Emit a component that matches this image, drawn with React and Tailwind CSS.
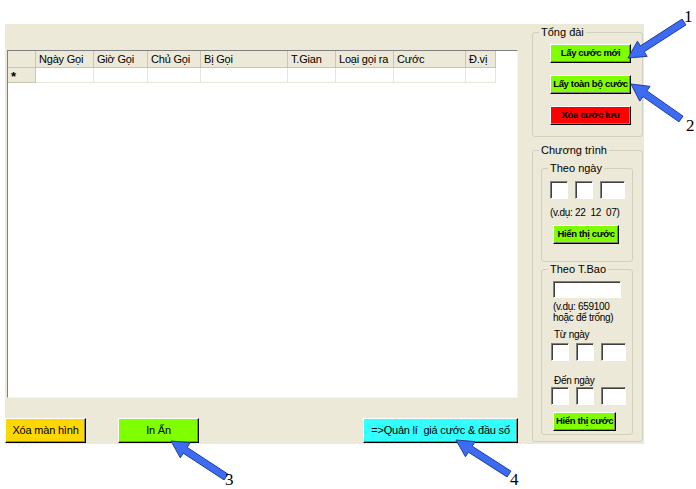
import React from "react";

const font = { fontFamily: '"Liberation Sans", Arial, sans-serif' };
const serif = { fontFamily: '"Liberation Serif", serif' };

const columns = [
  { label: "Ngày Gọi", w: "w-[58px]" },
  { label: "Giờ Gọi", w: "w-[54px]" },
  { label: "Chủ Gọi", w: "w-[53px]" },
  { label: "Bị Gọi", w: "w-[87px]" },
  { label: "T.Gian", w: "w-[48px]" },
  { label: "Loại gọi ra", w: "w-[58px]" },
  { label: "Cước", w: "w-[72px]" },
  { label: "Đ.vị", w: "w-[30px]" },
];

const arrows = [
  { from: [684, 22], to: [628, 58] },
  { from: [681, 119], to: [631, 84] },
  { from: [226, 477], to: [171, 441] },
  { from: [509, 474], to: [456, 440] },
];

function arrowPoints({ from, to }) {
  const dx = to[0] - from[0];
  const dy = to[1] - from[1];
  const len = Math.hypot(dx, dy);
  const ux = dx / len, uy = dy / len;
  const nx = -uy, ny = ux;
  const sw = 3.5, hw = 9, hl = 17;
  const neck = [to[0] - ux * hl, to[1] - uy * hl];
  const pts = [
    [from[0] + nx * sw, from[1] + ny * sw],
    [neck[0] + nx * sw, neck[1] + ny * sw],
    [neck[0] + nx * hw, neck[1] + ny * hw],
    to,
    [neck[0] - nx * hw, neck[1] - ny * hw],
    [neck[0] - nx * sw, neck[1] - ny * sw],
    [from[0] - nx * sw, from[1] - ny * sw],
  ];
  return pts.map((p) => p.join(",")).join(" ");
}

const btn3d = "border border-t-white border-l-white border-r-black border-b-black shadow-[inset_-1px_-1px_0_#808080] whitespace-nowrap p-0";
const boldBtn = "text-[9.5px] font-bold tracking-[-0.35px]";

function TextBox({ w, h = "h-[18px]" }) {
  return <div className={`${w} ${h} bg-white border border-t-[#808080] border-l-[#808080] border-r-white border-b-white shadow-[inset_1px_1px_0_#404040]`} />;
}

function Group({ title, className, children }) {
  return (
    <div className={`relative border border-[#D0D0BF] rounded-[3px] ${className}`}>
      <span className="absolute left-[6px] -top-[8px] px-[2px] bg-[#ECE9D8] text-[11px] leading-[14px] whitespace-nowrap">{title}</span>
      {children}
    </div>
  );
}

function DateBoxes() {
  return (
    <div className="flex">
      <TextBox w="w-[18px]" />
      <div className="ml-[7px]"><TextBox w="w-[18px]" /></div>
      <div className="ml-[7px]"><TextBox w="w-[25px]" /></div>
    </div>
  );
}

export default function App() {
  return (
    <div className="relative w-[696px] h-[489px] bg-white overflow-hidden text-black" style={font}>
      <div className="pt-[24px] pl-[5px]">
        <div className="w-[639px] h-[420px] bg-[#ECE9D8] flex">
          {/* left: grid + buttons */}
          <div className="w-[518px] flex flex-col">
            <div className="mt-[26px] ml-[2px] w-[511px] h-[348px] bg-white border border-t-[#808080] border-l-[#808080] border-r-[#F5F4EA] border-b-[#F5F4EA]">
              <div className="flex h-[17px] text-[11px] leading-[17px] tracking-[-0.2px]">
                <div className="w-[28px] bg-[#ECE9D8] border-r border-b border-[#C8C5B4]" />
                {columns.map((c) => (
                  <div key={c.label} className={`${c.w} bg-[#ECE9D8] border-r border-b border-[#C8C5B4] pl-[3px] whitespace-nowrap overflow-hidden`}>
                    {c.label}
                  </div>
                ))}
              </div>
              <div className="flex h-[15px] text-[11px]">
                <div className="w-[28px] bg-[#ECE9D8] border-r border-b border-[#C8C5B4] pl-[3px] leading-[17px] text-[13px] font-bold">*</div>
                {columns.map((c) => (
                  <div key={c.label} className={`${c.w} border-r border-b border-[#E8E6DA]`} />
                ))}
              </div>
            </div>
            <div className="mt-[20px] flex h-[25px] text-[11px] tracking-[-0.2px]">
              <button className={`w-[81px] h-[25px] bg-[#FFD700] ${btn3d}`}>Xóa màn hình</button>
              <button className={`ml-[32px] w-[81px] h-[25px] bg-[#80FF00] ${btn3d}`}>In Ấn</button>
              <button className={`ml-[164px] w-[155px] h-[25px] bg-[#33FFFF] ${btn3d}`}>=&gt;Quản lí&nbsp; giá cước &amp; đầu số</button>
            </div>
          </div>

          {/* right panel */}
          <div className="ml-[9px] w-[111px] flex flex-col">
            <Group title="Tổng đài" className="mt-[8px] h-[105px] pt-[11px] pl-[17px]">
              <button className={`block w-[81px] h-[19px] bg-[#80FF00] ${btn3d} ${boldBtn}`}>Lấy cước mới</button>
              <button className={`block mt-[12px] w-[81px] h-[19px] bg-[#80FF00] ${btn3d} ${boldBtn}`}>Lấy toàn bộ cước</button>
              <button className={`block mt-[12px] w-[81px] h-[19px] bg-[#FF0000] ${btn3d} ${boldBtn}`}>Xóa cước lưu</button>
            </Group>
            <Group title="Chương trình" className="mt-[13px] h-[292px] pt-[17px] pl-[8px]">
              <Group title="Theo ngày" className="w-[92px] h-[94px] pt-[12px] pl-[8px]">
                <DateBoxes />
                <div className="mt-[8px] text-[10px] leading-[12px] tracking-[-0.3px] whitespace-nowrap">(v.dụ: 22&nbsp; 12&nbsp; 07)</div>
                <button className={`block mt-[6px] ml-[3px] w-[66px] h-[19px] bg-[#80FF00] ${btn3d} ${boldBtn}`}>Hiển thị cước</button>
              </Group>
              <Group title="Theo T.Bao" className="mt-[7px] w-[92px] h-[166px] pt-[11px] pl-[11px]">
                <TextBox w="w-[68px]" h="h-[17px]" />
                <div className="mt-[3px] text-[10px] leading-[11px] tracking-[-0.3px] whitespace-nowrap">(v.dụ: 659100<br />hoặc để trống)</div>
                <div className="mt-[6px] ml-[1px] text-[10px] leading-[12px] tracking-[-0.3px]">Từ ngày</div>
                <div className="mt-[2px] -ml-[2px]"><DateBoxes /></div>
                <div className="mt-[14px] ml-[1px] text-[10px] leading-[12px] tracking-[-0.3px]">Đến ngày</div>
                <div className="mt-[0px] -ml-[2px]"><DateBoxes /></div>
                <button className={`block mt-[7px] w-[63px] h-[19px] bg-[#80FF00] ${btn3d} ${boldBtn}`}>Hiển thị cước</button>
              </Group>
            </Group>
          </div>
        </div>
      </div>

      {/* annotation arrows */}
      <svg className="absolute inset-0 pointer-events-none" width="696" height="489">
        {arrows.map((a, i) => (
          <polygon key={i} points={arrowPoints(a)} fill="#3D6CF2" stroke="#1E3E9E" strokeWidth="1" />
        ))}
      </svg>
      <span className="absolute left-[684px] top-[8px] text-[17px] leading-[18px]" style={serif}>1</span>
      <span className="absolute left-[686px] top-[117px] text-[17px] leading-[18px]" style={serif}>2</span>
      <span className="absolute left-[225px] top-[471px] text-[17px] leading-[18px]" style={serif}>3</span>
      <span className="absolute left-[510px] top-[471px] text-[17px] leading-[18px]" style={serif}>4</span>
    </div>
  );
}
